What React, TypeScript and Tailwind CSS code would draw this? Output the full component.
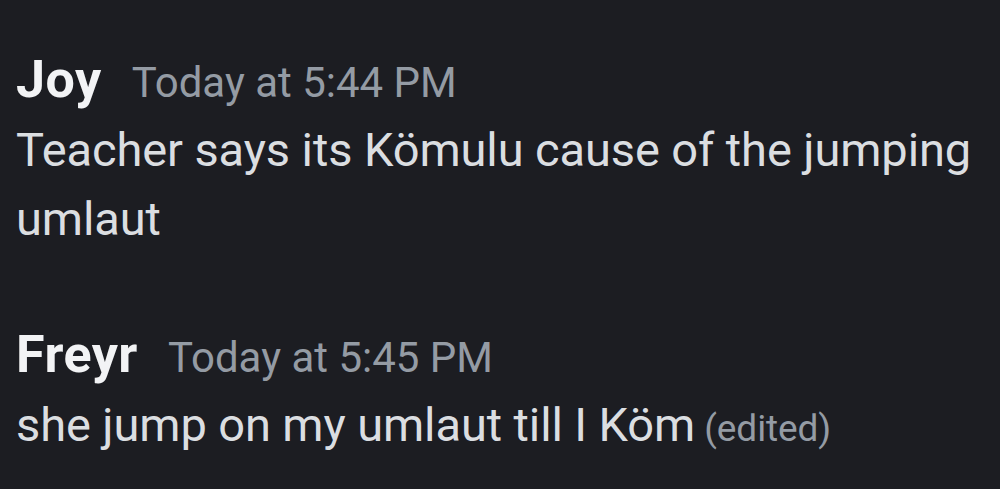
export default function App() {
  const messages = [
    { name: "Joy", time: "Today at 5:44 PM", text: "Teacher says its Kömulu cause of the jumping umlaut", edited: false },
    { name: "Freyr", time: "Today at 5:45 PM", text: "she jump on my umlaut till I Köm", edited: true },
  ];

  return (
    <div
      className="w-[1000px] h-[489px] bg-[#1c1d22] overflow-hidden pl-[16px] pt-[48px] flex flex-col gap-[70px]"
      style={{ fontFamily: "Roboto, sans-serif" }}
    >
      {messages.map((m) => (
        <div key={m.name} className="flex flex-col">
          <div className="flex items-baseline gap-[30px] leading-[64px]">
            <span className="text-[52px] font-bold text-[#f2f3f5] tracking-[0.5px]">{m.name}</span>
            <span className="text-[42px] text-[#949ba4]">{m.time}</span>
          </div>
          <div className="text-[47px] leading-[69px] text-[#dbdee1] tracking-[-0.1px]">
            {m.text}
            {m.edited && <span className="text-[37px] text-[#949ba4]"> (edited)</span>}
          </div>
        </div>
      ))}
    </div>
  );
}
